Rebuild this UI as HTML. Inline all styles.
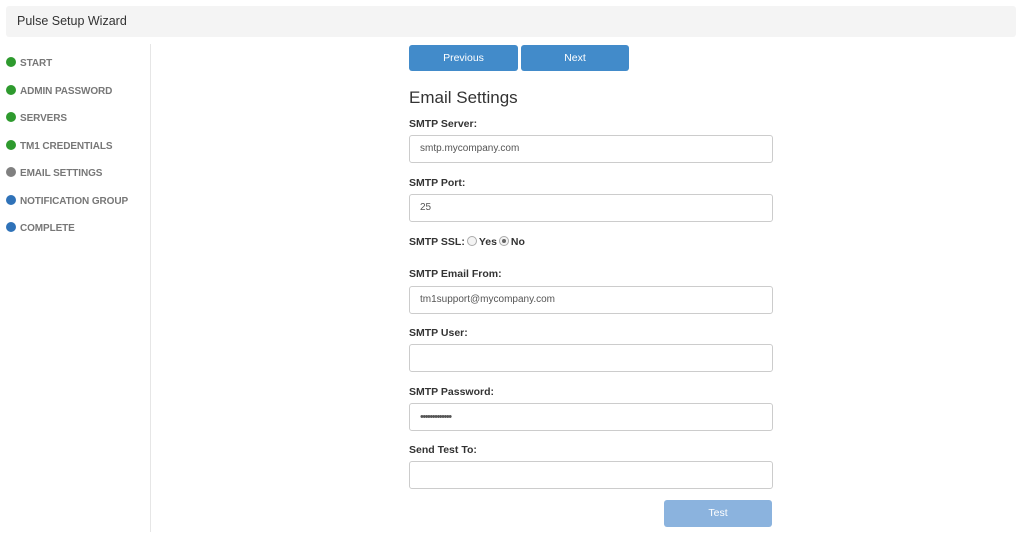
<!DOCTYPE html>
<html><head><style>
body{margin:0;width:1024px;height:535px;background:#fff;font-family:"Liberation Sans",sans-serif;position:relative;overflow:hidden}
.hdr{position:absolute;left:6px;top:6px;width:1010px;height:31px;background:#f4f4f4;border-radius:3px}
.hdr span{position:absolute;left:11px;top:8px;font-size:12.5px;color:#333}
.side{position:absolute;left:6px;top:0}
.it{position:absolute;left:0;white-space:nowrap;font-size:10px;font-weight:bold;color:#777;letter-spacing:-0.1px}
.it i{display:inline-block;width:10px;height:10px;border-radius:50%;vertical-align:-1px;margin-right:4px}
.g{background:#2e9a2e}.gr{background:#808080}.b{background:#2f72b8}
.div{position:absolute;left:150px;top:44px;width:1px;height:488px;background:#e6e6e6}
.btn{position:absolute;top:45px;height:26px;background:#428bca;border-radius:3px;color:#fff;font-size:10.5px;text-align:center;line-height:26px}
h2{position:absolute;left:409px;top:88px;margin:0;font-weight:normal;font-size:17px;color:#333}
.lb{position:absolute;left:409px;font-size:10.5px;font-weight:bold;color:#333}
.in{position:absolute;left:409px;width:362px;height:26px;border:1px solid #ccc;border-radius:3px;font-size:10px;color:#555;line-height:26px;box-sizing:content-box}
.in span{margin-left:10px}
.r{display:inline-block;width:8px;height:8px;border:1px solid #aaa;border-radius:50%;vertical-align:-1px;margin:0 2px;position:relative;background:#f4f4f4}
.r.on::after{content:"";position:absolute;left:2px;top:2px;width:4px;height:4px;border-radius:50%;background:#666}
</style></head><body>
<div class="hdr"><span>Pulse Setup Wizard</span></div>
<div class="side">
<div class="it" style="top:57px"><i class="g"></i>START</div>
<div class="it" style="top:85px"><i class="g"></i>ADMIN PASSWORD</div>
<div class="it" style="top:112px"><i class="g"></i>SERVERS</div>
<div class="it" style="top:140px"><i class="g"></i>TM1 CREDENTIALS</div>
<div class="it" style="top:167px"><i class="gr"></i>EMAIL SETTINGS</div>
<div class="it" style="top:195px"><i class="b"></i>NOTIFICATION GROUP</div>
<div class="it" style="top:222px"><i class="b"></i>COMPLETE</div>
</div>
<div class="div"></div>
<div class="btn" style="left:409px;width:109px">Previous</div>
<div class="btn" style="left:521px;width:108px">Next</div>
<h2>Email Settings</h2>
<div class="lb" style="top:118px">SMTP Server:</div>
<div class="in" style="top:135px"><span>smtp.mycompany.com</span></div>
<div class="lb" style="top:177px">SMTP Port:</div>
<div class="in" style="top:194px"><span>25</span></div>
<div class="lb" style="top:236px">SMTP SSL:<span class="r"></span>Yes<span class="r on"></span>No</div>
<div class="lb" style="top:268px">SMTP Email From:</div>
<div class="in" style="top:286px"><span>tm1support@mycompany.com</span></div>
<div class="lb" style="top:327px">SMTP User:</div>
<div class="in" style="top:344px"></div>
<div class="lb" style="top:386px">SMTP Password:</div>
<div class="in" style="top:403px"><span style="font-size:11px;letter-spacing:-1.5px">•••••••••••••</span></div>
<div class="lb" style="top:444px">Send Test To:</div>
<div class="in" style="top:461px"></div>
<div class="btn" style="left:664px;top:500px;width:108px;height:27px;line-height:27px;background:#8bb3de">Test</div>
</body></html>
